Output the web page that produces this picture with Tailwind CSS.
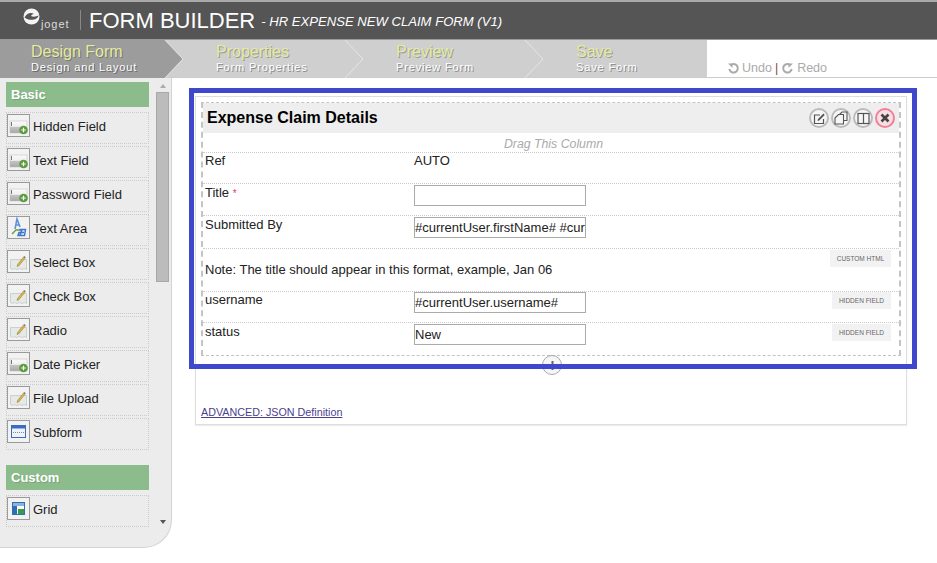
<!DOCTYPE html>
<html><head><meta charset="utf-8"><script src="https://cdn.jsdelivr.net/npm/@tailwindcss/browser@4"></script></head>
<body class="bg-white">
<svg width="0" height="0" class="absolute">
<defs>
<linearGradient id="g1" x1="0" y1="0" x2="0" y2="1"><stop offset="0" stop-color="#fafafa"/><stop offset=".45" stop-color="#f0f0f0"/><stop offset=".5" stop-color="#c4c4c4"/><stop offset="1" stop-color="#a8a8a8"/></linearGradient>
<symbol id="fld" viewBox="0 0 23 23"><rect x="0.5" y="0.5" width="22" height="22" fill="#f2f2f2" stroke="#9a9a9a"/><rect x="3" y="7" width="17" height="12" fill="url(#g1)" stroke="#bbb" stroke-width=".5"/><rect x="4" y="8" width="1" height="4" fill="#777"/><circle cx="16.500" cy="16" r="4.300" fill="#5c9c3c"/><path d="M14.300 16h4.400M16.500 13.800v4.400" stroke="#fff" stroke-width="1.200"/></symbol>
<symbol id="sel" viewBox="0 0 23 23"><rect x="0.5" y="0.5" width="22" height="22" fill="#f2f2f2" stroke="#9a9a9a"/><path d="M3.500 9.500h16v10l-2-1-2.500 1-2.500-1-2.500 1-2.500-1-2 1-2-1z" fill="#e4ebe6" stroke="#b8b8b8" stroke-width=".6"/><path d="M10.500 14.500l6-7.500 1.500 1.200-6 7.500-2 .8z" fill="#e3b540" stroke="#8c7440" stroke-width=".5"/><path d="M16.500 7l.8-1 1.500 1.200-.8 1z" fill="#777"/></symbol>
</defs>
</svg>
<div class="relative w-[937px] h-[563px] overflow-hidden text-[13px] text-[#222] font-['Liberation_Sans',Arial,sans-serif]">
  <!-- top bar -->
  <header class="h-[40px] bg-[#555] border-t-2 border-[#aaa] border-b border-b-[#999] flex items-center text-white">
    <div class="w-[81px] h-[20px] border-r border-[#888] flex items-start pl-[23px] shrink-0 mt-[-2px]">
      <svg width="17" height="17" viewBox="0 0 17 17" class="mt-[-2px] shrink-0"><circle cx="8.500" cy="8.500" r="8" fill="#f4f4f4"/><path d="M1.500 9.500C4 5 8 4 11 6 9.500 6 8.500 6.800 8 8c2 1 5 .8 7.500-.5C15 12 6 13.500 1.500 9.500z" fill="#555"/></svg>
      <span class="text-[11px] leading-none mt-[9px] ml-[1px] text-[#ddd] tracking-[0.9px]">joget</span>
    </div>
    <span class="text-[22px] ml-[8px] leading-none">FORM BUILDER</span>
    <span class="text-[13.100px] italic ml-[6px] mt-[3px] leading-none">- HR EXPENSE NEW CLAIM FORM (V1)</span>
  </header>
  <!-- steps -->
  <nav class="h-[38px] border-b border-[#ccc] flex">
    <div class="w-[707px] bg-[#cfcfcf] flex relative text-[#e4eb9e]">
      <svg class="absolute left-0 top-0" width="707" height="38" viewBox="0 0 707 38" fill="none">
        <path d="M0 0H165L183 19L165 38H0Z" fill="#9c9c9c"/>
        <path d="M165 0L183 19L165 38M345 0L363 19L345 38M525 0L543 19L525 38" stroke="#e6e6e6"/>
      </svg>
      <div class="relative w-[185px] pl-[31px] pt-[3px]"><div class="text-[16px] leading-[18px] [text-shadow:1px_1px_0_#777]">Design Form</div><div class="text-[11px] leading-[13px] tracking-[0.85px] text-white [text-shadow:1px_1px_0_#666]">Design and Layout</div></div>
      <div class="relative w-[180px] pl-[31px] pt-[3px]"><div class="text-[16px] leading-[18px] [text-shadow:1px_1px_0_#999]">Properties</div><div class="text-[11px] leading-[13px] tracking-[0.85px] text-white [text-shadow:1px_1px_0_#888]">Form Properties</div></div>
      <div class="relative w-[180px] pl-[31px] pt-[3px]"><div class="text-[16px] leading-[18px] [text-shadow:1px_1px_0_#999]">Preview</div><div class="text-[11px] leading-[13px] tracking-[0.85px] text-white [text-shadow:1px_1px_0_#888]">Preview Form</div></div>
      <div class="relative w-[160px] pl-[31px] pt-[3px]"><div class="text-[16px] leading-[18px] [text-shadow:1px_1px_0_#999]">Save</div><div class="text-[11px] leading-[13px] tracking-[0.85px] text-white [text-shadow:1px_1px_0_#888]">Save Form</div></div>
    </div>
    <div class="flex-1 flex items-end pl-[20px] pb-[1px] text-[12.500px] text-[#aaa] gap-[3px] leading-[16px]">
      <svg width="13" height="13" viewBox="0 0 13 13" class="mb-[1px] mr-[-1px]" fill="none"><path d="M3.500 3.200A4.300 4.300 0 1 1 2.300 7" stroke="#aaa" stroke-width="2"/><path d="M1 1.500h4.500v4.500z" fill="#aaa"/></svg>
      <span>Undo</span><span class="text-[#8a4a3a]">|</span>
      <svg width="13" height="13" viewBox="0 0 13 13" class="mb-[1px]" fill="none"><path d="M9.500 3.200A4.300 4.300 0 1 0 10.700 7" stroke="#aaa" stroke-width="2"/><path d="M12 1.500h-4.500v4.500z" fill="#aaa"/></svg>
      <span>Redo</span>
    </div>
  </nav>
  <main class="flex">
    <!-- sidebar -->
    <aside class="relative w-[172px] h-[470px] bg-[#ececec] border-r border-b border-[#d4d4d4] rounded-br-[28px] shrink-0">
      <div class="absolute left-[6px] top-[4px] w-[143px]">
        <h3 class="h-[25px] bg-[#8cbc8c] text-white font-bold text-[13px] leading-[25px] pl-[5px] [text-shadow:1px_1px_0_#7aa57a]">Basic</h3>
        <ul class="mt-[5px] flex flex-col gap-[2px]">
          <li class="h-[32px] border border-dotted border-[#ccc] flex items-start gap-[3px] pt-[1px]"><svg width="23" height="23"><use href="#fld"/></svg><span class="leading-[26px]">Hidden Field</span></li>
          <li class="h-[32px] border border-dotted border-[#ccc] flex items-start gap-[3px] pt-[1px]"><svg width="23" height="23"><use href="#fld"/></svg><span class="leading-[26px]">Text Field</span></li>
          <li class="h-[32px] border border-dotted border-[#ccc] flex items-start gap-[3px] pt-[1px]"><svg width="23" height="23"><use href="#fld"/></svg><span class="leading-[26px]">Password Field</span></li>
          <li class="h-[32px] border border-dotted border-[#ccc] flex items-start gap-[3px] pt-[1px]"><svg width="23" height="23" viewBox="0 0 23 23"><rect x=".5" y=".5" width="22" height="22" fill="#f2f2f2" stroke="#9a9a9a"/><path d="M8 13l2-10 3 8M9 9h4" fill="none" stroke="#5f93d8" stroke-width="1.600"/><path d="M5 18l4-4h6" fill="none" stroke="#6a9c4a" stroke-width="1.400"/><path d="M12.500 13.500h6l-1 6h-6.500l1-3h5M15 13.500l-2 6" fill="none" stroke="#3f76cc" stroke-width="1.500"/></svg><span class="leading-[26px]">Text Area</span></li>
          <li class="h-[32px] border border-dotted border-[#ccc] flex items-start gap-[3px] pt-[1px]"><svg width="23" height="23"><use href="#sel"/></svg><span class="leading-[26px]">Select Box</span></li>
          <li class="h-[32px] border border-dotted border-[#ccc] flex items-start gap-[3px] pt-[1px]"><svg width="23" height="23"><use href="#sel"/></svg><span class="leading-[26px]">Check Box</span></li>
          <li class="h-[32px] border border-dotted border-[#ccc] flex items-start gap-[3px] pt-[1px]"><svg width="23" height="23"><use href="#sel"/></svg><span class="leading-[26px]">Radio</span></li>
          <li class="h-[32px] border border-dotted border-[#ccc] flex items-start gap-[3px] pt-[1px]"><svg width="23" height="23"><use href="#fld"/></svg><span class="leading-[26px]">Date Picker</span></li>
          <li class="h-[32px] border border-dotted border-[#ccc] flex items-start gap-[3px] pt-[1px]"><svg width="23" height="23"><use href="#sel"/></svg><span class="leading-[26px]">File Upload</span></li>
          <li class="h-[32px] border border-dotted border-[#ccc] flex items-start gap-[3px] pt-[1px]"><svg width="23" height="23" viewBox="0 0 23 23"><rect x=".5" y=".5" width="22" height="22" fill="#f2f2f2" stroke="#9a9a9a"/><rect x="4.500" y="5.500" width="14" height="12" fill="#eef3fb" stroke="#3a6cc0"/><rect x="4.500" y="5.500" width="14" height="3" fill="#3a6cc0"/><path d="M6 12.500h11" stroke="#888" stroke-dasharray="1 1"/></svg><span class="leading-[26px]">Subform</span></li>
        </ul>
        <h3 class="mt-[15px] h-[25px] bg-[#8cbc8c] text-white font-bold text-[13px] leading-[25px] pl-[5px] [text-shadow:1px_1px_0_#7aa57a]">Custom</h3>
        <ul class="mt-[5px]">
          <li class="h-[32px] border border-dotted border-[#ccc] flex items-start gap-[3px] pt-[1px]"><svg width="23" height="23" viewBox="0 0 23 23"><rect x=".5" y=".5" width="22" height="22" fill="#f2f2f2" stroke="#9a9a9a"/><rect x="5.500" y="5.500" width="12" height="12" fill="#fff" stroke="#2f6fb0"/><rect x="6" y="6" width="11" height="3" fill="#8ab4dc"/><rect x="6" y="9" width="4" height="8" fill="#2f6fb0"/><rect x="11" y="12" width="6" height="5" fill="#3a9a4a"/></svg><span class="leading-[26px]">Grid</span></li>
        </ul>
      </div>
      <!-- scrollbar -->
      <div class="absolute left-[156px] top-0 w-[13px] h-[449px] flex flex-col items-center">
        <div class="mt-[6px] w-0 h-0 border-x-[3.500px] border-x-transparent border-b-[4px] border-b-[#aaa]"></div>
        <div class="mt-[4px] w-[13px] h-[190px] bg-[#bcbcbc] border border-[#a8a8a8]"></div>
        <div class="mt-auto mb-[3px] w-0 h-0 border-x-[3.500px] border-x-transparent border-t-[4px] border-t-[#555]"></div>
      </div>
    </aside>
    <!-- canvas -->
    <section class="ml-[23px] mt-[18px] w-[712px] h-[329px] border border-[#ddd] p-[5px] flex flex-col relative shrink-0 shadow-[0_1px_1px_#eee]">
      <div class="h-[254px] border-y border-x-2 border-dashed border-[#c4c4c4]">
        <div class="h-[30px] bg-[#eee] flex items-center pl-[4px] pr-[4px] justify-between">
          <h2 class="font-bold text-[16px] text-black">Expense Claim Details</h2>
          <div class="flex gap-[2px]">
            <span class="w-[20px] h-[20px] rounded-full border-2 border-[#bbb] bg-[#f6f6f6] flex items-center justify-center"><svg width="13" height="13" viewBox="0 0 13 13" fill="none"><path d="M10.500 7v4.500H1.500V3H7" stroke="#555" stroke-width="1.200"/><path d="M4.500 9l.5-2 5.500-5.500 1.200 1.500-5.500 5.500z" fill="#555"/></svg></span>
            <span class="w-[20px] h-[20px] rounded-full border-2 border-[#bbb] bg-[#f6f6f6] flex items-center justify-center"><svg width="14" height="14" viewBox="0 0 14 14" fill="none" stroke="#555" stroke-width="1.100"><path d="M5.500 3.500L8 1h5v8.500h-3.500M1 7l3.500-3.500H9.500V13H1z"/></svg></span>
            <span class="w-[20px] h-[20px] rounded-full border-2 border-[#bbb] bg-[#f6f6f6] flex items-center justify-center"><svg width="13" height="13" viewBox="0 0 13 13" fill="none" stroke="#555" stroke-width="1.200"><rect x="1" y="1.500" width="11" height="10"/><path d="M6.500 1.500v10"/></svg></span>
            <span class="w-[20px] h-[20px] rounded-full border-2 border-[#f08098] bg-[#f8dfe4] flex items-center justify-center"><svg width="10" height="10" viewBox="0 0 10 10" stroke="#444" stroke-width="2.600"><path d="M1.500 1.500l7 7M8.500 1.500l-7 7"/></svg></span>
          </div>
        </div>
        <div class="h-[19px] text-center italic text-[12.300px] leading-[22px] text-[#aaa] pl-[5px]">Drag This Column</div>
        <div class="h-[31px] border-t border-dotted border-[#ccc] flex pl-[2px]"><label class="w-[209px] leading-[14px] mt-[1px]">Ref</label><span class="leading-[14px] mt-[1px]">AUTO</span></div>
        <div class="h-[32px] border-t border-dotted border-[#ccc] flex pl-[2px]"><label class="w-[209px] leading-[14px] mt-[2px]">Title <span class="text-[#e04060] text-[10px]">*</span></label><input class="w-[172px] h-[21px] border border-[#aaa] bg-white mt-[1px]" value=""></div>
        <div class="h-[33px] border-t border-dotted border-[#ccc] flex pl-[2px]"><label class="w-[209px] leading-[14px] mt-[2px]">Submitted By</label><input class="w-[172px] h-[21px] border border-[#aaa] bg-white text-[13px] outline-none mt-[1px]" value="#currentUser.firstName# #currentUser.lastName#"></div>
        <div class="h-[43px] border-t border-dotted border-[#ccc] flex justify-between pl-[2px] pr-[8px]"><p class="mt-[14px] leading-[14px]">Note: The title should appear in this format, example, Jan 06</p><span class="w-[61px] h-[17px] mt-[1px] bg-[#f2f2f2] text-[#666] text-[6.500px] text-center leading-[17px] shrink-0">CUSTOM HTML</span></div>
        <div class="h-[31px] border-t border-dotted border-[#ccc] flex pl-[2px] pr-[8px]"><label class="w-[209px] leading-[14px] mt-[1px]">username</label><input class="w-[172px] h-[21px] border border-[#aaa] bg-white text-[13px] outline-none" value="#currentUser.username#"><span class="ml-auto w-[59px] h-[17px] bg-[#f2f2f2] text-[#666] text-[6.500px] text-center leading-[17px]">HIDDEN FIELD</span></div>
        <div class="h-[33px] border-t border-dotted border-[#ccc] flex pl-[2px] pr-[8px]"><label class="w-[209px] leading-[14px] mt-[2px]">status</label><input class="w-[172px] h-[21px] border border-[#aaa] bg-white text-[13px] outline-none mt-[1px]" value="New"><span class="ml-auto w-[59px] h-[17px] mt-[1px] bg-[#f2f2f2] text-[#666] text-[6.500px] text-center leading-[17px]">HIDDEN FIELD</span></div>
      </div>
      <button class="absolute left-[346px] top-[258px] w-[20px] h-[20px] rounded-full border border-[#aaa] bg-[#f6f6f6] flex items-center justify-center"><svg width="11" height="11" viewBox="0 0 11 11" stroke="#666" stroke-width="2"><path d="M5.500 1v9M1 5.500h9"/></svg></button>
      <a class="mt-auto mb-[1px] text-[10.750px] leading-[12px] underline text-[#4b3f8f]" href="#">ADVANCED: JSON Definition</a>
    </section>
  </main>
  <!-- annotation frame over the form -->
  <div class="absolute left-[189px] top-[88px] w-[728px] h-[281px] border-[5px] border-[#3f48cc] pointer-events-none"></div>
</div>
</body></html>
